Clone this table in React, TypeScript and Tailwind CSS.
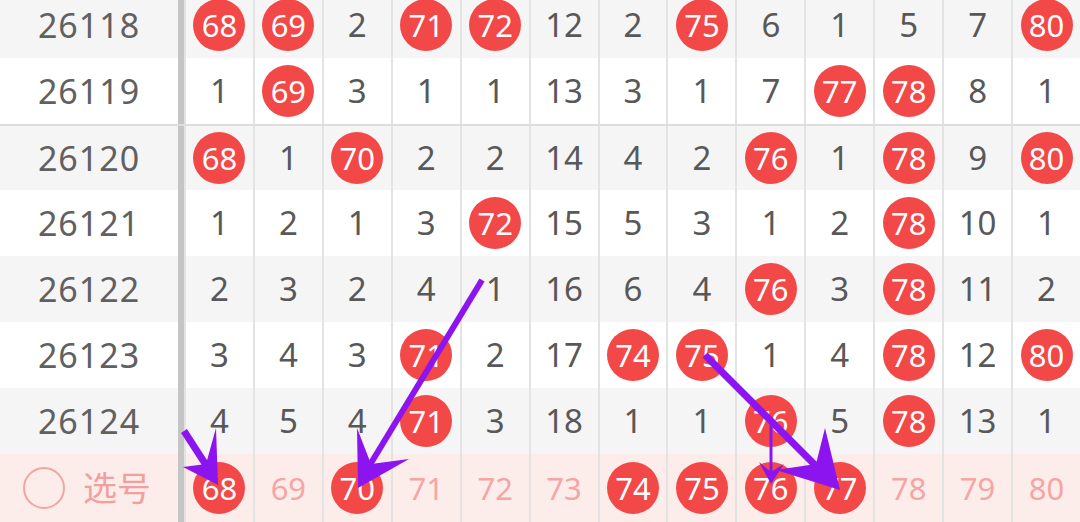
/**
 * TrendChart — lottery number distribution grid with selection row.
 */
import React from 'react';

// ---------------------------------------------------------------------------
// Data
// ---------------------------------------------------------------------------

type Cell = [number, boolean];

const h = (n: number): Cell => [n, true];
const m = (n: number): Cell => [n, false];

const ROWS: { period: string; cells: Cell[] }[] = [
  { period: '26118', cells: [h(68), h(69), m(2), h(71), h(72), m(12), m(2), h(75), m(6), m(1), m(5), m(7), h(80)] },
  { period: '26119', cells: [m(1), h(69), m(3), m(1), m(1), m(13), m(3), m(1), m(7), h(77), h(78), m(8), m(1)] },
  { period: '26120', cells: [h(68), m(1), h(70), m(2), m(2), m(14), m(4), m(2), h(76), m(1), h(78), m(9), h(80)] },
  { period: '26121', cells: [m(1), m(2), m(1), m(3), h(72), m(15), m(5), m(3), m(1), m(2), h(78), m(10), m(1)] },
  { period: '26122', cells: [m(2), m(3), m(2), m(4), m(1), m(16), m(6), m(4), h(76), m(3), h(78), m(11), m(2)] },
  { period: '26123', cells: [m(3), m(4), m(3), h(71), m(2), m(17), h(74), h(75), m(1), m(4), h(78), m(12), h(80)] },
  { period: '26124', cells: [m(4), m(5), m(4), h(71), m(3), m(18), m(1), m(1), h(76), m(5), h(78), m(13), m(1)] },
];

const PICKED = new Set([68, 70, 74, 75, 76, 77]);
const PICK_NUMBERS = Array.from({ length: 13 }, (_, i) => 68 + i);

// ---------------------------------------------------------------------------
// Pieces
// ---------------------------------------------------------------------------

function Ball({ n }: { n: number }) {
  return (
    <div className="flex h-[52px] w-[52px] items-center justify-center rounded-full bg-[#f34848] text-[31px] leading-none text-white">
      {n}
    </div>
  );
}

function GridCell({ children }: { children: React.ReactNode }) {
  return (
    <div className="flex flex-1 items-center justify-center border-l-2 border-[#e3e3e3]">{children}</div>
  );
}

function Arrows() {
  const c = '#8c14ef';
  return (
    <svg className="pointer-events-none absolute inset-0" width={1080} height={522} viewBox="0 0 1080 522">
      {/* 72 -> 70 */}
      <line x1={482} y1={280} x2={368} y2={468} stroke={c} strokeWidth={6} />
      <polygon points="358,488 357,428 371,464 409,459" fill={c} />
      {/* left edge -> 68 */}
      <line x1={184} y1={431} x2={206} y2={465} stroke={c} strokeWidth={7} />
      <polygon points="218,485 216,428 206,464 183,467" fill={c} />
      {/* 75 -> 77 */}
      <line x1={705} y1={355} x2={820} y2={470} stroke={c} strokeWidth={7} />
      <polygon points="840,490 825,428 816,464 776,470" fill={c} />
      {/* 76 -> 76 */}
      <line x1={771} y1={420} x2={771} y2={474} stroke={c} strokeWidth={3} />
      <polygon points="771,484 759,462 771,472 784,464" fill={c} />
    </svg>
  );
}

// ---------------------------------------------------------------------------
// Component
// ---------------------------------------------------------------------------

export default function App() {
  return (
    <div
      className="relative h-[522px] w-[1080px] overflow-hidden bg-white"
      style={{ fontFamily: '"Noto Sans", "Noto Sans CJK SC", sans-serif' }}
    >
      <div className="-mt-2">
        {ROWS.map((row, i) => (
          <div
            key={row.period}
            className={`flex h-[66px] ${i % 2 === 0 ? 'bg-[#f5f5f5]' : 'bg-white'} ${
              row.period === '26120' ? 'border-t-2 border-[#dedede]' : ''
            }`}
          >
            <div className="flex w-[178px] items-center justify-center text-[34px] tracking-[1px] text-[#606060]">
              {row.period}
            </div>
            <div className="w-[6px] bg-[#c5c5c5]" />
            <div className="flex flex-1">
              {row.cells.map(([n, hit], j) => (
                <GridCell key={j}>
                  {hit ? <Ball n={n} /> : <span className="text-[33px] text-[#585858]">{n}</span>}
                </GridCell>
              ))}
            </div>
          </div>
        ))}

        {/* Selection row */}
        <div className="flex h-[68px] bg-[#fdedea]">
          <div className="flex w-[178px] items-center gap-[18px] pl-[23px]">
            <div className="h-[42px] w-[42px] rounded-full border-2 border-[#f3a3a3]" />
            <span className="text-[34px] leading-none text-[#f19f9f]">选号</span>
          </div>
          <div className="w-[6px] bg-[#c5c5c5]" />
          <div className="flex flex-1">
            {PICK_NUMBERS.map((n) => (
              <GridCell key={n}>
                {PICKED.has(n) ? <Ball n={n} /> : <span className="text-[31px] text-[#f4a6a6]">{n}</span>}
              </GridCell>
            ))}
          </div>
        </div>
      </div>

      <Arrows />
    </div>
  );
}
